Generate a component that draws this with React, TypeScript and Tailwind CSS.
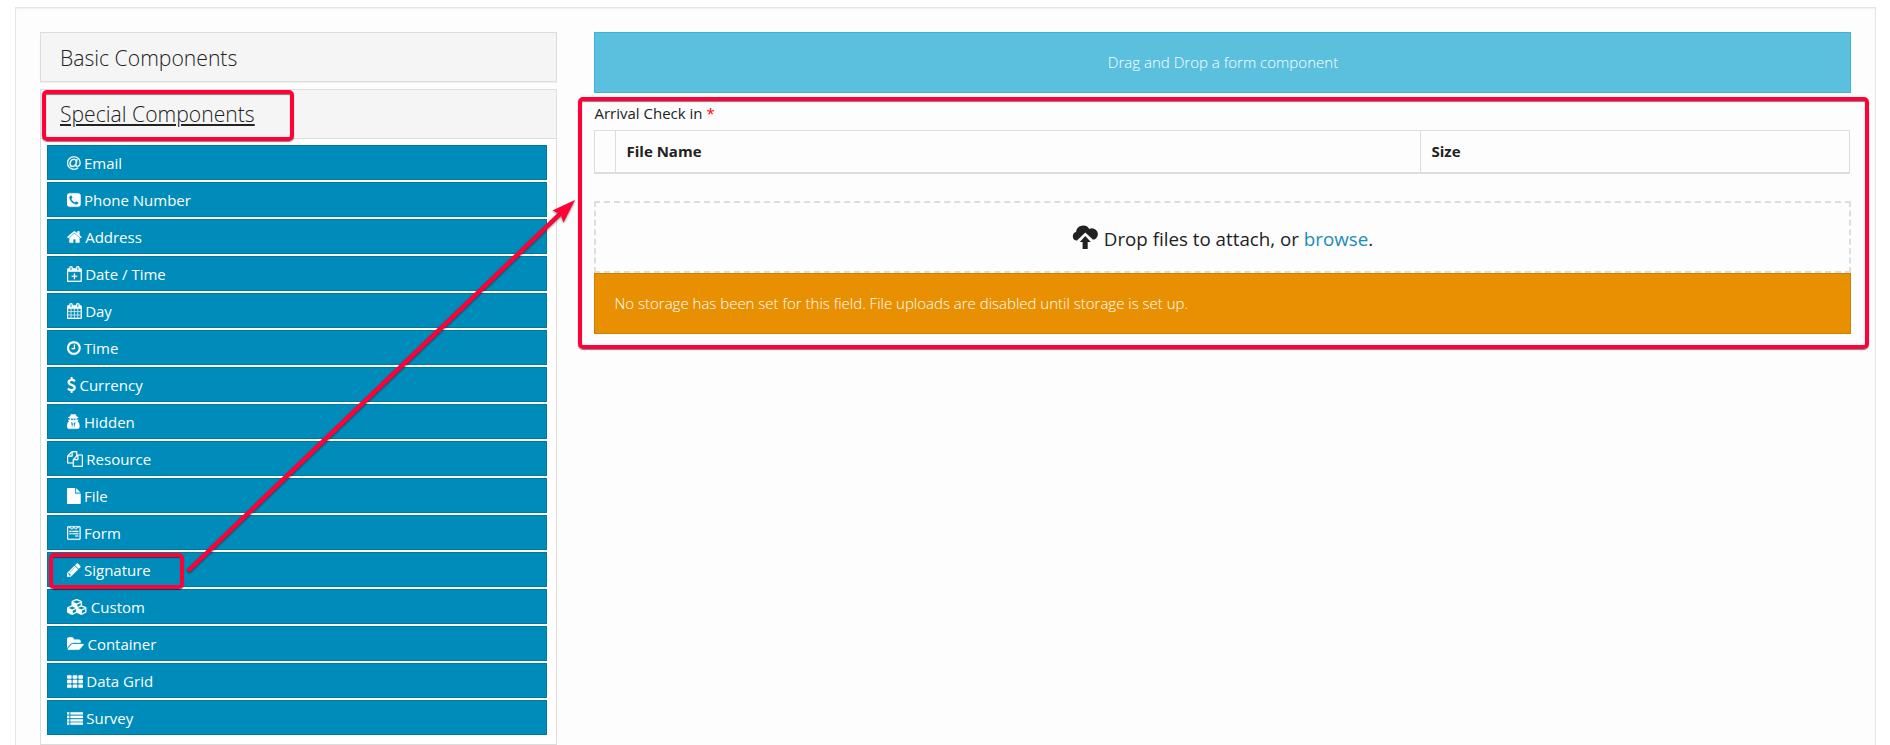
import React from "react";
import { FaWpforms } from "react-icons/fa";

type Glyph = { x: number; w: number; d: string };

const GLYPHS: Record<string, Glyph> = {
  at: { x: 128, w: 1536, d: "M1100 775q0-108-53.5-169t-147.5-61q-63 0-124 30.5t-110 84.5-79.5 137-30.5 180q0 112 53.5 173t150.5 61q96 0 176-66.5t122.5-166 42.5-203.5zm564 121q0 111-37 197t-98.5 135-131.5 74.5-145 27.5q-6 0-15.5.5t-16.5.5q-95 0-142-53-28-33-33-83-52 66-131.5 110t-173.5 44q-161 0-249.5-95.5t-88.5-269.5q0-157 66-290t179-210.5 246-77.5q87 0 155 35.5t106 99.5l2-19 11-56q1-6 5.5-12t9.5-6h118q5 0 13 11 5 5 3 16l-120 614q-5 24-5 48 0 39 12.5 52t44.5 13q28-1 57-5.5t73-24 77-50 57-89.5 24-137q0-292-174-466t-466-174q-130 0-248.5 51t-204 136.5-136.5 204-51 248.5 51 248.5 136.5 204 204 136.5 248.5 51q228 0 405-144 11-9 24-8t21 12l41 49q8 12 7 24-2 13-12 22-102 83-227.5 128t-258.5 45q-156 0-298-61t-245-164-164-245-61-298 61-298 164-245 245-164 298-61q344 0 556 212t212 556z" },
  phone: { x: 128, w: 1536, d: "M1408 1193q0-11-2-16t-18-16.5-40.5-25-47.5-26.5-45.5-25-28.5-15q-5-3-19-13t-25-15-21-5q-15 0-36.5 20.5t-39.5 45-38.5 45-33.5 20.5q-7 0-16.5-3.5t-15.5-6.5-17-9.5-14-8.5q-99-55-170-126.5t-127-170.5q-2-3-8.5-14t-9.5-17-6.5-15.5-3.5-16.5q0-13 20.5-33.5t45-38.5 45-39.5 20.5-36.5q0-10-5-21t-15-25-13-19q-3-6-15-28.5t-25-45.5-26.5-47.5-25-40.5-16.5-18-16-2q-48 0-101 22-46 21-80 94.5t-34 130.5q0 16 2.5 34t5 30.5 9 33 10 29.5 12.5 33 11 30q60 164 216.5 320.5t320.5 216.5q6 2 30 11t33 12.5 29.5 10 33 9 30.5 5 34 2.5q57 0 130.5-34t94.5-80q22-53 22-101zm256-777v960q0 119-84.5 203.5t-203.5 84.5h-960q-119 0-203.5-84.5t-84.5-203.5v-960q0-119 84.5-203.5t203.5-84.5h960q119 0 203.5 84.5t84.5 203.5z" },
  home: { x: 64, w: 1664, d: "M1472 992v480q0 26-19 45t-45 19h-384v-384h-256v384h-384q-26 0-45-19t-19-45v-480q0-1 .5-3t.5-3l575-474 575 474q1 2 1 6zm223-69l-62 74q-8 9-21 11h-3q-13 0-21-7l-692-577-692 577q-12 8-24 7-13-2-21-11l-62-74q-8-10-7-23.5t11-21.5l719-599q32-26 76-26t76 26l244 204v-195q0-14 9-23t23-9h192q14 0 23 9t9 23v408l219 182q10 8 11 21.5t-7 23.5z" },
  calendarPlus: { x: 128, w: 1664, d: "M1664 256q52 0 90 38t38 90v1280q0 52-38 90t-90 38h-1408q-52 0-90-38t-38-90v-1280q0-52 38-90t90-38h128v-96q0-66 47-113t113-47h64q66 0 113 47t47 113v96h384v-96q0-66 47-113t113-47h64q66 0 113 47t47 113v96h128zm-384-96v288q0 14 9 23t23 9h64q14 0 23-9t9-23v-288q0-14-9-23t-23-9h-64q-14 0-23 9t-9 23zm-768 0v288q0 14 9 23t23 9h64q14 0 23-9t9-23v-288q0-14-9-23t-23-9h-64q-14 0-23 9t-9 23zm1152 1504v-1024h-1408v1024h1408zm-640-576h224q14 0 23 9t9 23v64q0 14-9 23t-23 9h-224v224q0 14-9 23t-23 9h-64q-14 0-23-9t-9-23v-224h-224q-14 0-23-9t-9-23v-64q0-14 9-23t23-9h224v-224q0-14 9-23t23-9h64q14 0 23 9t9 23v224z" },
  calendar: { x: 64, w: 1664, d: "M192 1664h288v-288h-288v288zm352 0h320v-288h-320v288zm-352-352h288v-320h-288v320zm352 0h320v-320h-320v320zm-352-384h288v-288h-288v288zm736 736h320v-288h-320v288zm-384-736h320v-288h-320v288zm768 736h288v-288h-288v288zm-384-352h320v-320h-320v320zm-352-864v-288q0-13-9.5-22.5t-22.5-9.5h-64q-13 0-22.5 9.5t-9.5 22.5v288q0 13 9.5 22.5t22.5 9.5h64q13 0 22.5-9.5t9.5-22.5zm736 864h288v-320h-288v320zm-384-384h320v-288h-320v288zm384 0h288v-288h-288v288zm32-480v-288q0-13-9.5-22.5t-22.5-9.5h-64q-13 0-22.5 9.5t-9.5 22.5v288q0 13 9.5 22.5t22.5 9.5h64q13 0 22.5-9.5t9.5-22.5zm384-64v1280q0 52-38 90t-90 38h-1408q-52 0-90-38t-38-90v-1280q0-52 38-90t90-38h128v-96q0-66 47-113t113-47h64q66 0 113 47t47 113v96h384v-96q0-66 47-113t113-47h64q66 0 113 47t47 113v96h128q52 0 90 38t38 90z" },
  clock: { x: 128, w: 1536, d: "M1024 544v448q0 14-9 23t-23 9h-320q-14 0-23-9t-9-23v-64q0-14 9-23t23-9h224v-352q0-14 9-23t23-9h64q14 0 23 9t9 23zm416 352q0-148-73-273t-198-198-273-73-273 73-198 198-73 273 73 273 198 198 273 73 273-73 198-198 73-273zm224 0q0 209-103 385.5t-279.5 279.5-385.5 103-385.5-103-279.5-279.5-103-385.5 103-385.5 279.5-279.5 385.5-103 385.5 103 279.5 279.5 103 385.5z" },
  dollar: { x: 384, w: 1024, d: "M1362 1185q0 153-99.5 263.5t-258.5 136.5v175q0 14-9 23t-23 9h-135q-13 0-22.5-9.5t-9.5-22.5v-175q-66-9-127.5-31t-101.5-44.5-74-48-46.5-37.5-17.5-18q-17-21-2-41l103-135q7-10 23-12 15-2 24 9l2 2q113 99 243 125 37 8 74 8 81 0 142.5-43t61.5-122q0-28-15-53t-33.5-42-58.5-37.5-66-32-80-32.5q-39-16-61.5-25t-61.5-26.5-62.5-31-56.5-35.5-53.5-42.5-43.5-49-35.5-58-21-66.5-8.5-78q0-138 98-242t255-134v-180q0-13 9.5-22.5t22.5-9.5h135q14 0 23 9t9 23v176q57 6 110.5 23t87 33.5 63.5 37.5 39 29 15 14q17 18 5 38l-81 146q-8 15-23 16-14 3-27-7-3-3-14.5-12t-39-26.5-58.5-32-74.5-26-85.5-11.5q-95 0-155 43t-60 111q0 26 8.5 48t29.5 41.5 39.5 33 56 31 60.5 27 70 27.5q53 20 81 31.5t76 35 75.5 42.5 62 50 53 63.5 31.5 76.5 13 94z" },
  secret: { x: 0, w: 1536, d: "M576 1536l96-448-96-128-128-64zm256 0l128-640-128 64-96 128zm160-1010q-2-4-4-6-10-8-96-8-70 0-167 19-7 2-21 2t-21-2q-97-19-167-19-86 0-96 8-2 2-4 6 2 18 4 27 2 3 7.5 6.5t7.5 10.5q2 4 7.5 20.5t7 20.5 7.5 17 8.5 17 9 14 12 13.5 14 9.5 17.5 8 20.5 4 24.5 2q36 0 59-12.5t32.5-30 14.5-34.5 11.5-29.5 17.5-12.5h12q11 0 17.5 12.5t11.5 29.5 14.5 34.5 32.5 30 59 12.5q13 0 24.5-2t20.5-4 17.5-8 14-9.5 12-13.5 9-14 8.5-17 7.5-17 7-20.5 7.5-20.5q2-7 7.5-10.5t7.5-6.5q2-9 4-27zm416 879q0 121-73 190t-194 69h-874q-121 0-194-69t-73-190q0-61 4.5-118t19-125.5 37.5-123.5 63.5-103.5 93.5-74.5l-90-220h214q-22-64-22-128 0-12 2-32-194-40-194-96 0-57 210-99 17-62 51.5-134t70.5-114q32-37 76-37 30 0 84 31t84 31 84-31 84-31q44 0 76 37 36 42 70.5 114t51.5 134q210 42 210 99 0 56-194 96 7 81-20 160h214l-82 225q63 33 107.5 96.5t65.5 143.5 29 151.5 8 148.5z" },
  copy: { x: 0, w: 1792, d: "M1696 384q40 0 68 28t28 68v1216q0 40-28 68t-68 28h-960q-40 0-68-28t-28-68v-288h-544q-40 0-68-28t-28-68v-672q0-40 20-88t48-76l408-408q28-28 76-48t88-20h416q40 0 68 28t28 68v328q68-40 128-40h416zm-544 213l-299 299h299v-299zm-640-384l-299 299h299v-299zm196 647l316-316v-416h-384v416q0 40-28 68t-68 28h-416v640h512v-256q0-40 20-88t48-76zm956 804v-1152h-384v416q0 40-28 68t-68 28h-416v640h896z" },
  file: { x: 128, w: 1536, d: "M1152 512v-472q22 14 36 28l408 408q14 14 28 36h-472zm-128 32q0 40 28 68t68 28h544v1056q0 40-28 68t-68 28h-1344q-40 0-68-28t-28-68v-1600q0-40 28-68t68-28h800v544z" },
  pencil: { x: 128, w: 1536, d: "M491 1536l91-91-235-235-91 91v107h128v128h107zm523-928q0-22-22-22-10 0-17 7l-542 542q-7 7-7 17 0 22 22 22 10 0 17-7l542-542q7-7 7-17zm-54-192l416 416-832 832h-416v-416zm683 96q0 53-37 90l-166 166-416-416 166-165q36-38 90-38 53 0 91 38l235 234q37 39 37 91z" },
  cubes: { x: 0, w: 2304, d: "M640 1632l384-192v-314l-384 164v342zm-64-454l404-173-404-173-404 173zm1088 454l384-192v-314l-384 164v342zm-64-454l404-173-404-173-404 173zm-448-293l384-165v-266l-384 164v267zm-64-379l441-189-441-189-441 189zm1088 518v416q0 36-19 67t-52 47l-448 224q-25 14-57 14t-57-14l-448-224q-4-2-7-4-2 2-7 4l-448 224q-25 14-57 14t-57-14l-448-224q-33-16-52-47t-19-67v-416q0-38 21.5-70t56.5-48l434-186v-400q0-38 21.5-70t56.5-48l448-192q23-10 50-10t50 10l448 192q35 16 56.5 48t21.5 70v400l434 186q36 16 57 48t21 70z" },
  folder: { x: -64, w: 1920, d: "M1815 952q0 31-31 66l-336 396q-43 51-120.5 86.5t-143.5 35.5h-1088q-34 0-60.5-13t-26.5-43q0-31 31-66l336-396q43-51 120.5-86.5t143.5-35.5h1088q34 0 60.5 13t26.5 43zm-343-344v160h-832q-94 0-197 47.5t-164 119.5l-337 396-5 6q0-4-.5-12.5t-.5-12.5v-960q0-92 66-158t158-66h320q92 0 158 66t66 158v32h544q92 0 158 66t66 158z" },
  grid: { x: 0, w: 1792, d: "M96 256h320q96 0 96 96v192q0 96-96 96h-320q-96 0-96-96v-192q0-96 96-96zM736 256h320q96 0 96 96v192q0 96-96 96h-320q-96 0-96-96v-192q0-96 96-96zM1376 256h320q96 0 96 96v192q0 96-96 96h-320q-96 0-96-96v-192q0-96 96-96zM96 768h320q96 0 96 96v192q0 96-96 96h-320q-96 0-96-96v-192q0-96 96-96zM736 768h320q96 0 96 96v192q0 96-96 96h-320q-96 0-96-96v-192q0-96 96-96zM1376 768h320q96 0 96 96v192q0 96-96 96h-320q-96 0-96-96v-192q0-96 96-96zM96 1280h320q96 0 96 96v192q0 96-96 96h-320q-96 0-96-96v-192q0-96 96-96zM736 1280h320q96 0 96 96v192q0 96-96 96h-320q-96 0-96-96v-192q0-96 96-96zM1376 1280h320q96 0 96 96v192q0 96-96 96h-320q-96 0-96-96v-192q0-96 96-96z" },
  list: { x: 0, w: 1792, d: "M0 256h256v256h-256zM384 256h1408v256h-1408zM0 640h256v256h-256zM384 640h1408v256h-1408zM0 1024h256v256h-256zM384 1024h1408v256h-1408zM0 1408h256v256h-256zM384 1408h1408v256h-1408z" },
};

const ITEMS: [string, string][] = [
  ["at", "Email"],
  ["phone", "Phone Number"],
  ["home", "Address"],
  ["calendarPlus", "Date / Time"],
  ["calendar", "Day"],
  ["clock", "Time"],
  ["dollar", "Currency"],
  ["secret", "Hidden"],
  ["copy", "Resource"],
  ["file", "File"],
  ["form", "Form"],
  ["pencil", "Signature"],
  ["cubes", "Custom"],
  ["folder", "Container"],
  ["grid", "Data Grid"],
  ["list", "Survey"],
];

function ItemIcon({ name }: { name: string }) {
  if (name === "form") {
    return <FaWpforms className="h-4 w-[13.7px] shrink-0 stroke-white [stroke-width:6]" />;
  }
  const g = GLYPHS[name];
  return (
    <svg
      className="h-4 shrink-0 stroke-white [stroke-width:20]"
      style={{ width: (g.w * 16) / 1792 }}
      viewBox={`${g.x} 0 ${g.w} 1792`}
      fill="currentColor"
    >
      <path d={g.d} />
    </svg>
  );
}

function Sidebar() {
  return (
    <aside className="w-[517px] shrink-0">
      <div className="flex h-[50px] items-center border border-[#ddd] bg-[#f5f5f5] pt-[2px] pl-[19px] text-[21.15px] font-light shadow-[0_1px_1px_rgba(0,0,0,0.05)]">
        Basic Components
      </div>
      <div className="mt-[7px] h-[656px] border border-[#ddd] bg-white">
        <div className="flex h-[49px] items-center border-b border-[#ddd] bg-[#f5f5f5] pl-[19px] text-[21.15px] font-light">
          <span className="underline decoration-2 underline-offset-2">Special Components</span>
        </div>
        <ul className="flex flex-col gap-[2px] px-[6px] pt-[6px] pr-[9px]">
          {ITEMS.map(([icon, label]) => (
            <li
              key={label}
              className="flex h-[35px] items-center gap-[3.3px] border border-[#0079a1] bg-[#008cba] pt-px pl-[19px] text-[15px] leading-none text-white"
            >
              <ItemIcon name={icon} />
              <span className="pt-px">{label}</span>
            </li>
          ))}
        </ul>
      </div>
    </aside>
  );
}

function FormArea() {
  return (
    <main className="w-[1257px]">
      <div className="flex h-[61px] items-center justify-center border border-[#3db5da] bg-[#5bc0de] pl-px text-[15.06px] font-light text-white">
        Drag and Drop a form component
      </div>
      <div className="flex h-[37px] items-center pt-[4px] pl-[0.5px] text-[15px]">
        Arrival Check in&nbsp;<span className="text-[#f00]">*</span>
      </div>
      <div className="flex h-[44px] w-[1256px] border border-b-2 border-[#ddd] text-[15px] font-bold">
        <div className="w-[20px]" />
        <div className="flex w-[805px] items-center border-l border-[#ddd] pl-[10.5px]">File Name</div>
        <div className="flex flex-1 items-center border-l border-[#ddd] pl-[10.5px]">Size</div>
      </div>
      <div className="mt-[27px] flex h-[72px] items-center justify-center border-2 border-dashed border-[#ddd] pt-[4px] text-[18.75px]">
        <svg className="mt-[-4px] mr-[6px] h-[26px] w-[26px]" viewBox="0 0 26 26" fill="currentColor">
          <path d="M6 15.6Q5.2 16.8 4.2 16.6A4.4 4.4 0 0 1 4 8.1A7.2 7.2 0 0 1 17.3 5A5.6 5.6 0 1 1 22.6 15.5L20.8 15.6L13.3 8.5Z" />
          <path d="M13.3 12L18.8 18H15.7V25H10.6V18H7.8Z" />
        </svg>
        <span>
          Drop files to attach, or <a className="text-[#1a8cba]">browse</a>.
        </span>
      </div>
      <div className="flex h-[61px] items-center border border-[#cc8000] bg-[#e99002] pl-[19.5px] text-[15px] font-light text-white">
        No storage has been set for this field. File uploads are disabled until storage is set up.
      </div>
    </main>
  );
}

function Annotations() {
  return (
    <div className="pointer-events-none absolute inset-0">
      <div className="absolute top-[90px] left-[42px] h-[51px] w-[252px] rounded-[5px] border-4 border-[#ff0037] shadow-[0_1px_1px_rgba(0,0,0,0.5),inset_0_1px_1px_rgba(0,0,0,0.5)]" />
      <div className="absolute top-[553px] left-[49px] h-[36px] w-[135px] rounded-[5px] border-4 border-[#ff0037] shadow-[0_1px_1px_rgba(0,0,0,0.5),inset_0_1px_1px_rgba(0,0,0,0.5)]" />
      <div className="absolute top-[97px] left-[578px] h-[252px] w-[1291px] rounded-[5px] border-4 border-[#ff0037] shadow-[0_1px_1px_rgba(0,0,0,0.5),inset_0_1px_1px_rgba(0,0,0,0.5)]" />
      <svg className="absolute top-0 left-0 drop-shadow-[0_1px_1px_rgba(0,0,0,0.5)]" width="620" height="620" viewBox="0 0 620 620">
        <path d="M188 571L562 212" stroke="#ff0037" strokeWidth="4.5" fill="none" />
        <path d="M575 200L552.5 210.5L560.5 214L563.5 222.5Z" fill="#ff0037" />
      </svg>
    </div>
  );
}

export default function App() {
  return (
    <div className="relative h-[745px] w-[1890px] overflow-hidden bg-white pt-[7px] pl-[15px] font-['Open_Sans',sans-serif] text-[#222]">
      <div className="flex h-[760px] w-[1861px] gap-[37px] border border-[#e6e6e6] bg-[#fdfdfd] pt-[24px] pl-[24px] shadow-[inset_0_1px_1px_rgba(0,0,0,0.05)]">
        <Sidebar />
        <FormArea />
      </div>
      <Annotations />
    </div>
  );
}
